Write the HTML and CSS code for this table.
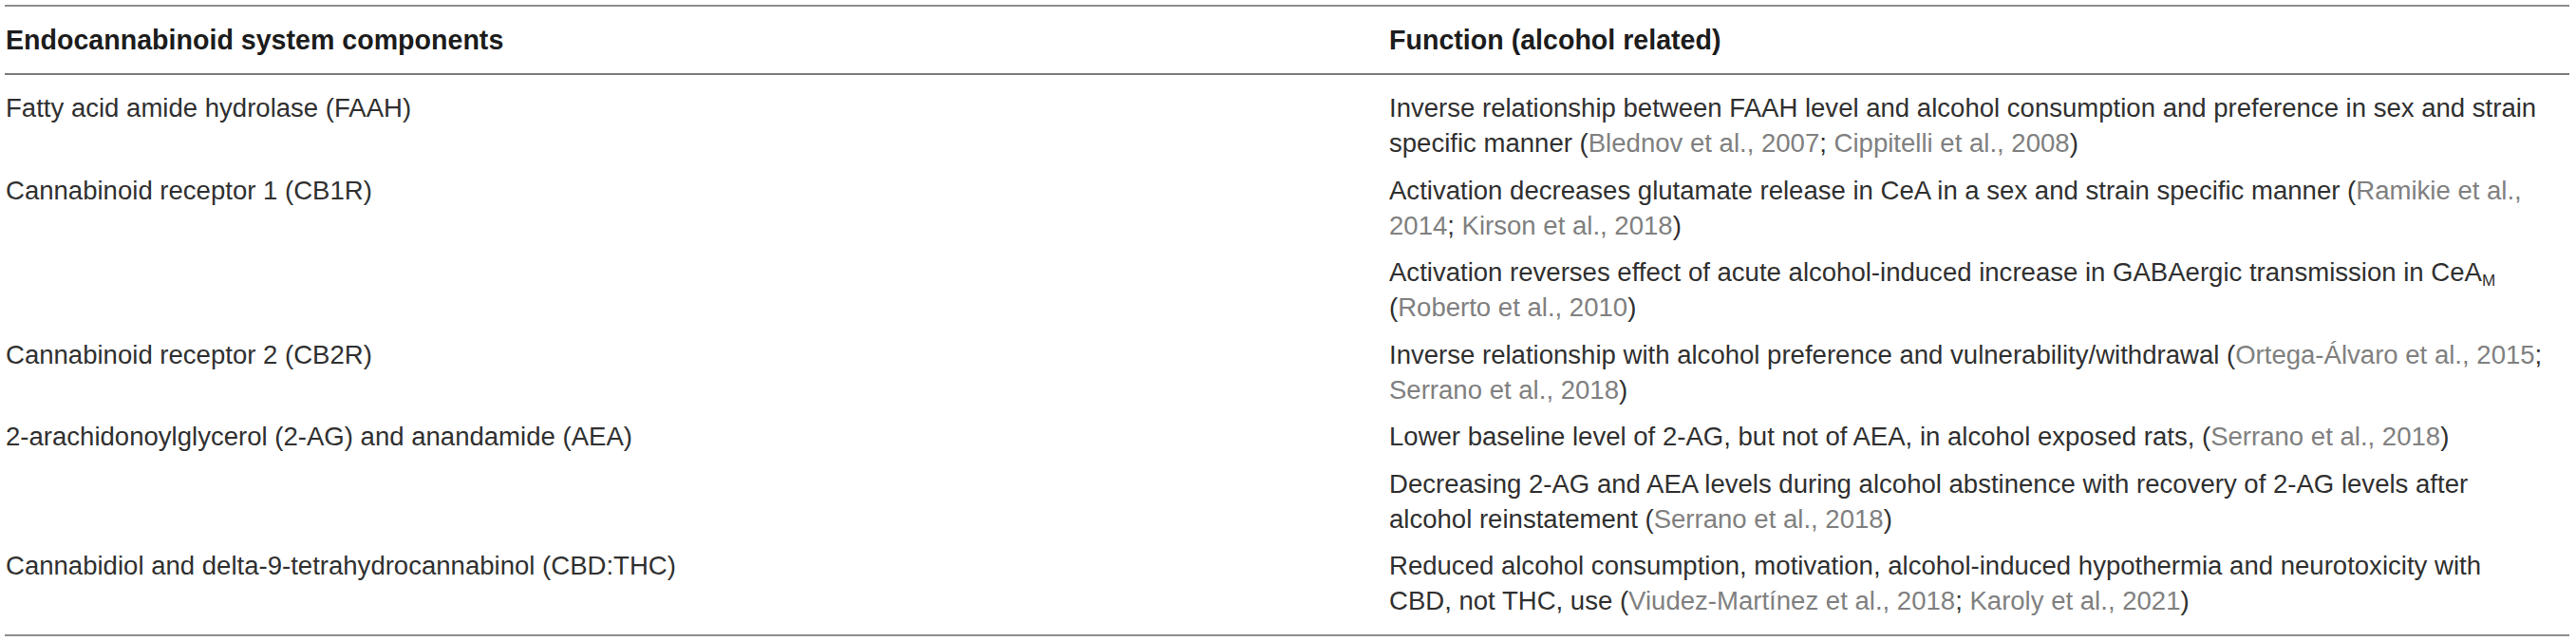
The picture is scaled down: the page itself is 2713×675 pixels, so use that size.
FILE: index.html
```html
<!DOCTYPE html>
<html lang="en">
<head>
<meta charset="utf-8">
<title>Endocannabinoid system components</title>
<link rel="stylesheet" href="styles.css">
</head>
<body>
<div class="wrap">
<table class="ecs">
  <colgroup><col class="c1"><col class="c2"></colgroup>
  <thead>
    <tr><th>Endocannabinoid system components</th><th class="fn">Function (alcohol related)</th></tr>
  </thead>
  <tbody>
    <tr class="first">
      <td>Fatty acid amide hydrolase (FAAH)</td>
      <td class="fn">Inverse relationship between FAAH level and alcohol consumption and preference in sex and strain specific manner (<span class="ref">Blednov et al., 2007</span>; <span class="ref">Cippitelli et al., 2008</span>)</td>
    </tr>
    <tr>
      <td rowspan="2">Cannabinoid receptor 1 (CB1R)</td>
      <td class="fn">Activation decreases glutamate release in CeA in a sex and strain specific manner (<span class="ref">Ramikie et al., 2014</span>; <span class="ref">Kirson et al., 2018</span>)</td>
    </tr>
    <tr>
      <td class="fn">Activation reverses effect of acute alcohol-induced increase in GABAergic transmission in CeA<sub>M</sub> (<span class="ref">Roberto et al., 2010</span>)</td>
    </tr>
    <tr>
      <td>Cannabinoid receptor 2 (CB2R)</td>
      <td class="fn">Inverse relationship with alcohol preference and vulnerability/withdrawal (<span class="ref">Ortega-Álvaro et al., 2015</span>; <span class="ref">Serrano et al., 2018</span>)</td>
    </tr>
    <tr>
      <td rowspan="2">2-arachidonoylglycerol (2-AG) and anandamide (AEA)</td>
      <td class="fn">Lower baseline level of 2-AG, but not of AEA, in alcohol exposed rats, (<span class="ref">Serrano et al., 2018</span>)</td>
    </tr>
    <tr>
      <td class="fn">Decreasing 2-AG and AEA levels during alcohol abstinence with recovery of 2-AG levels after<br>alcohol reinstatement (<span class="ref">Serrano et al., 2018</span>)</td>
    </tr>
    <tr class="last">
      <td>Cannabidiol and delta-9-tetrahydrocannabinol (CBD:THC)</td>
      <td class="fn">Reduced alcohol consumption, motivation, alcohol-induced hypothermia and neurotoxicity with<br>CBD, not THC, use (<span class="ref">Viudez-Martínez et al., 2018</span>; <span class="ref">Karoly et al., 2021</span>)</td>
    </tr>
  </tbody>
</table>
</div>
</body>
</html>
```

FILE: styles.css
```css
html, body {
  margin: 0;
  padding: 0;
  background: #ffffff;
}

.wrap {
  padding: 5px 7px 0 5px;
}

.ecs {
  width: 2701px;
  table-layout: fixed;
  border-collapse: collapse;
  font-family: "Liberation Sans", Arial, Helvetica, sans-serif;
  color: #303030;
  border-top: 2px solid #8c8c8c;
  border-bottom: 2px solid #8c8c8c;
}

.c1 { width: 1450px; }
.c2 { width: 1251px; }

.ecs th {
  text-align: left;
  font-weight: bold;
  font-size: 28.6px;
  line-height: 37px;
  color: #1c1c1c;
  padding: 16.5px 0 16.5px 1px;
  border-bottom: 2px solid #7d7d7d;
  vertical-align: top;
}

.ecs td {
  font-size: 27.55px;
  line-height: 37px;
  padding: 6px 0 6.5px 1px;
  vertical-align: top;
}

.ecs th.fn,
.ecs td.fn {
  padding-left: 8px;
  padding-right: 4px;
}

.ecs tr.first td {
  padding-top: 16px;
}

.ecs tr.last td {
  padding-bottom: 17px;
}

.ref {
  color: #808080;
}

sub {
  font-size: 0.62em;
  line-height: 0;
  vertical-align: -0.3em;
}
```
